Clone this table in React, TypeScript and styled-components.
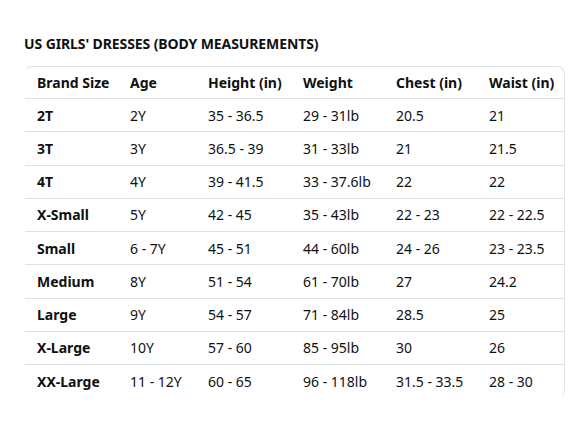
import { createGlobalStyle, styled } from "styled-components"

const GlobalStyle = createGlobalStyle`
  body {
    margin: 0;
    background: #ffffff;
    font-family: "Noto Sans", "Liberation Sans", sans-serif;
    color: #0f1111;
  }
`

const Page = styled.div`
  padding: 34px 25px 0 24px;
  width: 588px;
  box-sizing: border-box;
`

const Title = styled.h2`
  margin: 0 0 13px;
  font-size: 14px;
  line-height: 19px;
  font-weight: 700;
  letter-spacing: -0.1px;
`

const Frame = styled.div`
  width: 539px;
  border: 1px solid;
  border-color: #dfe2e2 #dfe2e2 transparent transparent;
  border-radius: 8px;
  overflow: hidden;
`

const Table = styled.table`
  width: 100%;
  border-collapse: collapse;
  table-layout: fixed;
  font-size: 14px;
`

const HeadCell = styled.th`
  text-align: left;
  font-weight: 700;
  height: 31px;
  padding: 0 0 0 12px;
  white-space: nowrap;
`

const Row = styled.tr`
  border-top: 1px solid #dfe2e2;
`

const Cell = styled.td<{ $bold?: boolean }>`
  height: 32.25px;
  padding: 0 0 0 12px;
  font-weight: ${(p) => (p.$bold ? 700 : 400)};
  white-space: nowrap;
`

const widths = [93, 78, 95, 93, 93, 87]
const headers = ["Brand Size", "Age", "Height (in)", "Weight", "Chest (in)", "Waist (in)"]
const rows = [
  ["2T", "2Y", "35 - 36.5", "29 - 31lb", "20.5", "21"],
  ["3T", "3Y", "36.5 - 39", "31 - 33lb", "21", "21.5"],
  ["4T", "4Y", "39 - 41.5", "33 - 37.6lb", "22", "22"],
  ["X-Small", "5Y", "42 - 45", "35 - 43lb", "22 - 23", "22 - 22.5"],
  ["Small", "6 - 7Y", "45 - 51", "44 - 60lb", "24 - 26", "23 - 23.5"],
  ["Medium", "8Y", "51 - 54", "61 - 70lb", "27", "24.2"],
  ["Large", "9Y", "54 - 57", "71 - 84lb", "28.5", "25"],
  ["X-Large", "10Y", "57 - 60", "85 - 95lb", "30", "26"],
  ["XX-Large", "11 - 12Y", "60 - 65", "96 - 118lb", "31.5 - 33.5", "28 - 30"],
]

export default function App() {
  return (
    <>
      <GlobalStyle />
      <Page>
        <Title>US GIRLS' DRESSES (BODY MEASUREMENTS)</Title>
        <Frame>
          <Table>
            <colgroup>
              {widths.map((w, i) => (
                <col key={i} style={{ width: w }} />
              ))}
            </colgroup>
            <thead>
              <tr>
                {headers.map((h) => (
                  <HeadCell key={h}>{h}</HeadCell>
                ))}
              </tr>
            </thead>
            <tbody>
              {rows.map((r) => (
                <Row key={r[0]}>
                  {r.map((c, i) => (
                    <Cell key={i} $bold={i === 0}>
                      {c}
                    </Cell>
                  ))}
                </Row>
              ))}
            </tbody>
          </Table>
        </Frame>
      </Page>
    </>
  )
}
